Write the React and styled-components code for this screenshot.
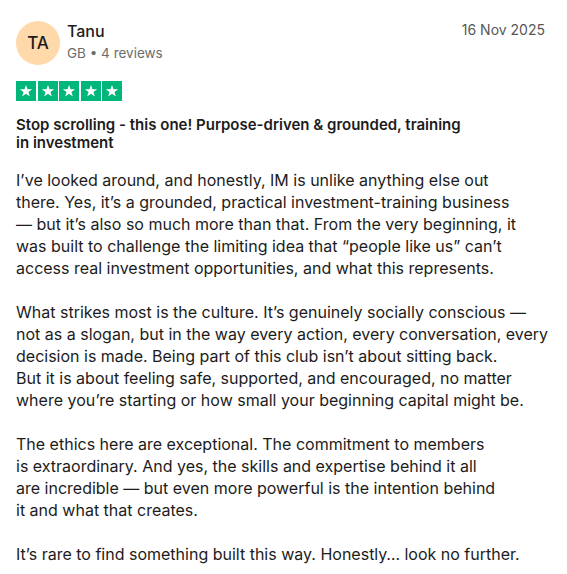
import React from "react";
import styled, { createGlobalStyle } from "styled-components";

const GlobalStyle = createGlobalStyle`
  html, body {
    margin: 0;
    padding: 0;
    background: #ffffff;
  }
  body {
    font-family: Inter, "Liberation Sans", Arial, sans-serif;
    color: #1c1c1c;
    -webkit-font-smoothing: antialiased;
  }
`;

const review = {
  initials: "TA",
  name: "Tanu",
  country: "GB",
  reviews: 4,
  date: "16 Nov 2025",
  rating: 5,
  title: "Stop scrolling - this one! Purpose-driven & grounded, training\nin investment",
  paragraphs: [
    "I’ve looked around, and honestly, IM is unlike anything else out\nthere. Yes, it’s a grounded, practical investment-training business\n— but it’s also so much more than that. From the very beginning, it\nwas built to challenge the limiting idea that “people like us” can’t\naccess real investment opportunities, and what this represents.",
    "What strikes most is the culture. It’s genuinely socially conscious —\nnot as a slogan, but in the way every action, every conversation, every\ndecision is made. Being part of this club isn’t about sitting back.\nBut it is about feeling safe, supported, and encouraged, no matter\nwhere you’re starting or how small your beginning capital might be.",
    "The ethics here are exceptional. The commitment to members\nis extraordinary. And yes, the skills and expertise behind it all\nare incredible — but even more powerful is the intention behind\nit and what that creates.",
    "It’s rare to find something built this way. Honestly… look no further.",
  ],
};

const Card = styled.article`
  padding: 21px 22px 0 16px;
  width: 567px;
  box-sizing: border-box;
`;

const Header = styled.header`
  display: flex;
  align-items: flex-start;
  justify-content: space-between;
`;

const Consumer = styled.div`
  display: flex;
  align-items: center;
  gap: 7px;
`;

const Avatar = styled.div`
  width: 44px;
  height: 44px;
  border-radius: 50%;
  background: #ffd9aa;
  display: flex;
  align-items: center;
  justify-content: center;
  font-size: 17px;
  font-weight: 500;
  color: #1c1c1c;
`;

const Meta = styled.div`
  display: flex;
  flex-direction: column;
  gap: 3px;
  margin-top: -3px;
`;

const Name = styled.span`
  font-size: 16px;
  font-weight: 500;
  line-height: 19px;
`;

const Sub = styled.span`
  font-size: 13.5px;
  color: #6c6c6c;
  line-height: 18px;
`;

const DateText = styled.time`
  font-size: 14px;
  color: #575757;
  line-height: 18px;
`;

const Stars = styled.div`
  display: flex;
  gap: 1.5px;
  margin-top: 16px;
`;

const StarBox = styled.span`
  width: 20px;
  height: 20px;
  background: ${p => (p.$on ? "#00b67a" : "#dcdce6")};
  display: flex;
  align-items: center;
  justify-content: center;
`;

const Title = styled.h2`
  margin: 15px 0 0;
  font-size: 15px;
  font-weight: 600;
  line-height: 18px;
  white-space: pre;
  color: #1c1c1c;
`;

const Body = styled.div`
  margin-top: 17px;
  display: flex;
  flex-direction: column;
  gap: 22px;
`;

const Paragraph = styled.p`
  margin: 0;
  font-size: 16px;
  line-height: 22px;
  white-space: pre;
  color: #1c1c1c;
`;

const Star = () => (
  <svg width="14" height="14" viewBox="0 0 24 24">
    <path
      fill="#fff"
      d="M12 1.5l2.6 7.6H22.6l-6.4 4.7 2.4 7.7L12 16.8l-6.6 4.7 2.4-7.7L1.4 9.1h8z"
    />
  </svg>
);

export default function App() {
  return (
    <>
      <GlobalStyle />
      <Card>
        <Header>
          <Consumer>
            <Avatar>{review.initials}</Avatar>
            <Meta>
              <Name>{review.name}</Name>
              <Sub>
                {review.country} • {review.reviews} reviews
              </Sub>
            </Meta>
          </Consumer>
          <DateText>{review.date}</DateText>
        </Header>
        <Stars>
          {[1, 2, 3, 4, 5].map(i => (
            <StarBox key={i} $on={i <= review.rating}>
              <Star />
            </StarBox>
          ))}
        </Stars>
        <Title>{review.title}</Title>
        <Body>
          {review.paragraphs.map((p, i) => (
            <Paragraph key={i}>{p}</Paragraph>
          ))}
        </Body>
      </Card>
    </>
  );
}
